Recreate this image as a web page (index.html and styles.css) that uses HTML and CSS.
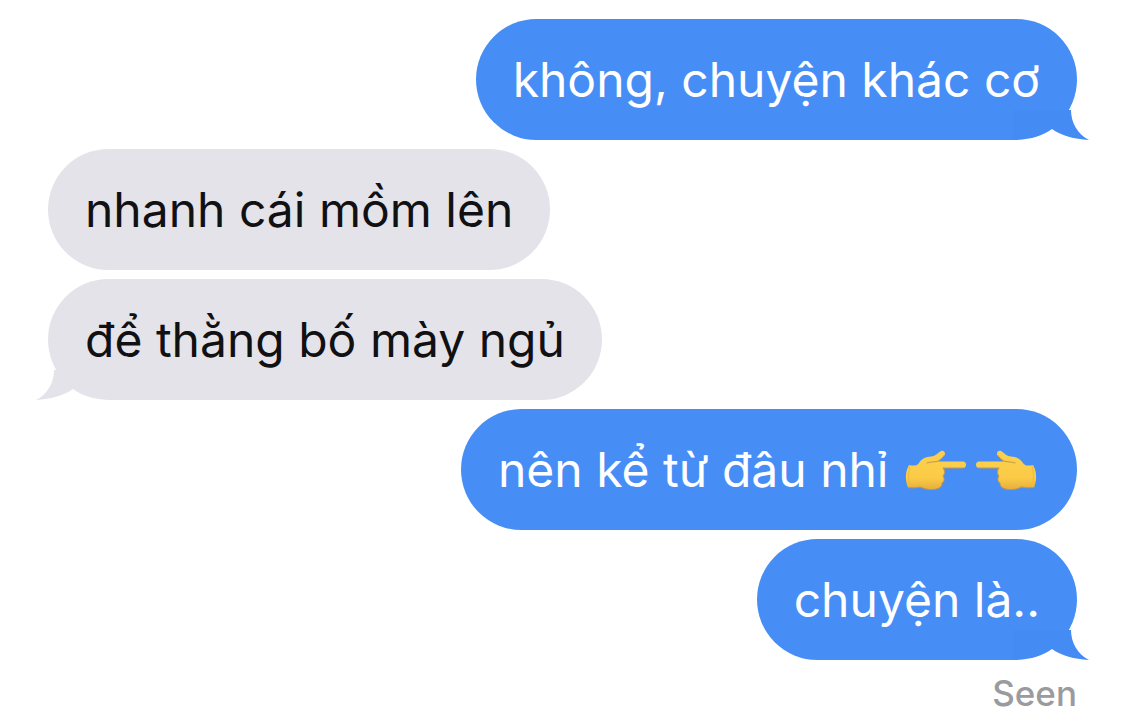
FILE: index.html
```html
<!DOCTYPE html>
<html lang="vi">
<head>
<meta charset="utf-8">
<title>Messages</title>
<link rel="stylesheet" href="styles.css">
</head>
<body>
<svg class="defs" aria-hidden="true">
  <defs>
    <linearGradient id="skin" x1="0" y1="0" x2="0" y2="1">
      <stop offset="0" stop-color="#fbd04e"/>
      <stop offset="0.7" stop-color="#fbcb47"/>
      <stop offset="1" stop-color="#e6ad3c"/>
    </linearGradient>
    <symbol id="hand" viewBox="0 0 62 42">
      <path fill="url(#skin)" d="M4 15C9 16 12 16 14 13C17 8 21 7 26 6.500C31 6 33 2.500 36 1C39 0 41 3 39.500 5.500C37.500 8 35 10 33 11.500H58C62 11.500 62 18 58 18H38.500C40 21 40 24 38 26C40 29 39 32 37 33C37 37 34 39 28 39.500C23 40 19 38.500 15 37C11 38 8 38 3 37.500C0 30 0 22 4 15Z"/>
      <path fill="none" stroke="#c99545" stroke-width="1" stroke-linecap="round" d="M39.500 5C37.500 8 35 10 32 11.500C28 12 25 12 22 13M38 18H58M38.500 18.500C40 21 40 24 38 26C40 29 39 32 37 33C37 37 34 39 28 39.500C23 40 19 38.500 15 37C11 38 8 38 3 37.500"/>
      <path fill="none" stroke="#efb93f" stroke-width="1" d="M5 16C3 22 3 30 5 37"/>
    </symbol>
    <symbol id="tail" viewBox="0 0 76 30">
      <path class="tail-gap" d="M57 0H76V30H0V27Z"/>
      <path fill="currentColor" d="M0 0H58C58 12 64 24 76 30C61 29 49 26 39 19C29 26 19 29 4 30H0Z"/>
    </symbol>
  </defs>
</svg>
<main class="thread">
  <p class="bubble sent">không, chuyện khác cơ<svg class="tail" aria-hidden="true"><use href="#tail"/></svg></p>
  <p class="bubble received">nhanh cái mồm lên</p>
  <p class="bubble received">để thằng bố mày ngủ<svg class="tail" aria-hidden="true"><use href="#tail"/></svg></p>
  <p class="bubble sent">nên kể từ đâu nhỉ <span class="hands"><svg class="hand" role="img" aria-label="👉"><use href="#hand"/></svg><svg class="hand flipped" role="img" aria-label="👈"><use href="#hand"/></svg></span></p>
  <p class="bubble sent">chuyện là..<svg class="tail" aria-hidden="true"><use href="#tail"/></svg></p>
  <p class="status">Seen</p>
</main>
</body>
</html>
```
FILE: styles.css
```css
body {
  margin: 0;
  background: #fff;
  font-family: Inter, "Liberation Sans", sans-serif;
}

.defs {
  position: absolute;
  width: 0;
  height: 0;
}

.thread {
  display: flex;
  flex-direction: column;
  gap: 9px;
  padding: 19px 48px 0;
}

.bubble {
  position: relative;
  margin: 0;
  padding: 31px 37px 30px;
  border-radius: 61px;
  font-size: 48px;
  line-height: 60px;
  white-space: nowrap;
}

.sent {
  align-self: flex-end;
  background: #468ef6;
  color: #fff;
}

.received {
  align-self: flex-start;
  background: #e4e3e9;
  color: #111113;
}

.tail {
  position: absolute;
  bottom: 0;
  width: 76px;
  height: 30px;
}

.sent .tail {
  right: -12px;
  color: #448bf4;
}

.received .tail {
  left: -12px;
  color: #e4e3e9;
  transform: scaleX(-1);
}

.tail-gap {
  fill: #fff;
}

.hands {
  display: inline-flex;
  gap: 8px;
  margin: 0 3px;
  vertical-align: -5px;
}

.hand {
  width: 62px;
  height: 42px;
}

.flipped {
  transform: scaleX(-1);
}

.status {
  margin: 0;
  padding-top: 2px;
  align-self: flex-end;
  color: #9b9b9f;
  font-size: 35px;
  font-weight: 500;
  line-height: 44px;
}
```
